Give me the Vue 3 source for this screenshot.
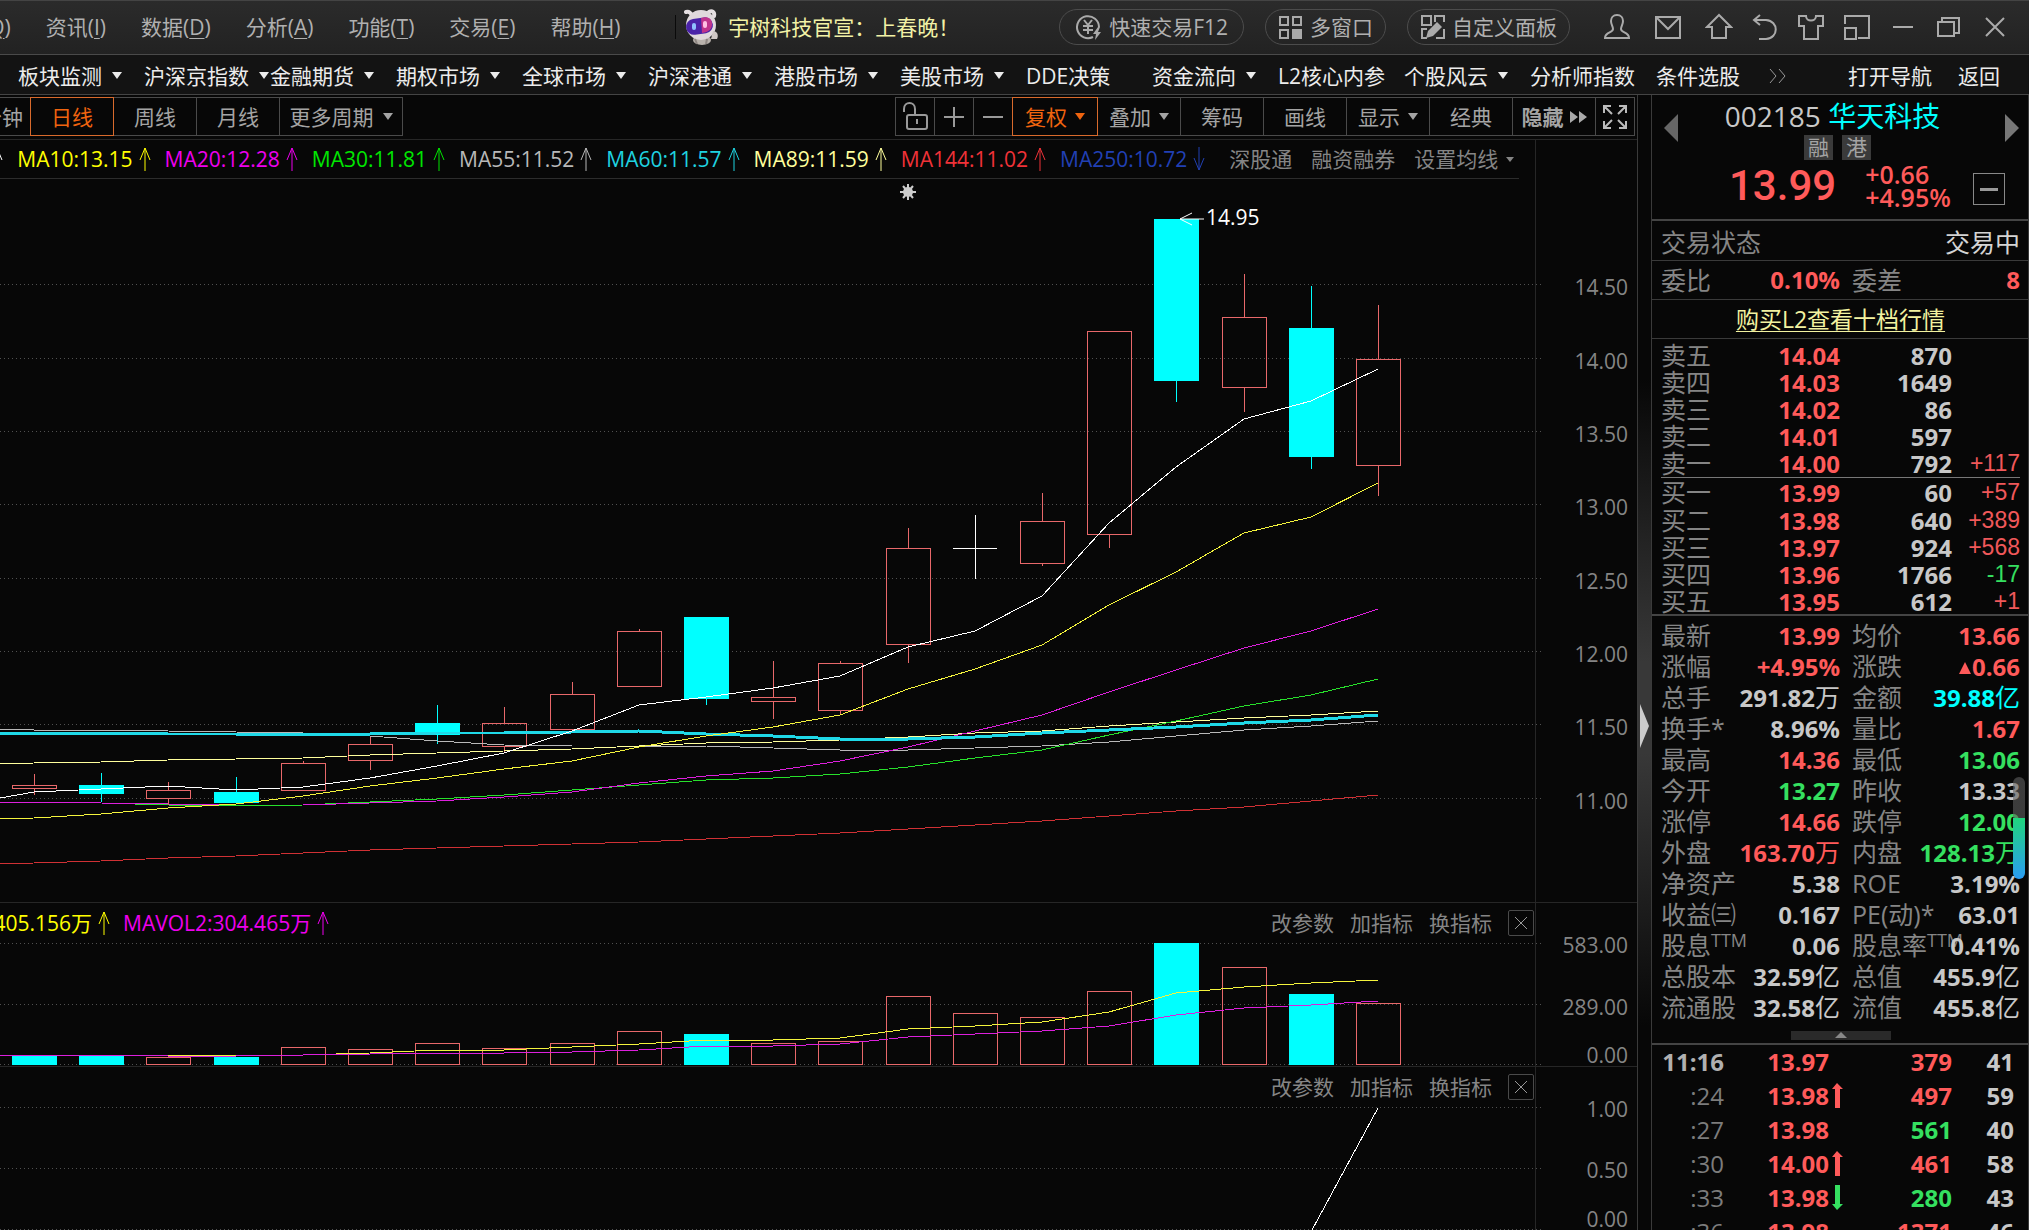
<script setup>
const menus = [
  ['报价', 'Q'], ['资讯', 'I'], ['数据', 'D'], ['分析', 'A'], ['功能', 'T'], ['交易', 'E'], ['帮助', 'H'],
]

const links = [
  ['板块监测', 1], ['沪深京指数', 1], ['金融期货', 1], ['期权市场', 1], ['全球市场', 1], ['沪深港通', 1],
  ['港股市场', 1], ['美股市场', 1], ['DDE决策', 0], ['资金流向', 1], ['L2核心内参', 0], ['个股风云', 1],
  ['分析师指数', 0], ['条件选股', 0],
]

const averages = [
  ['MA5:13.92', '#ffffff', 1], ['MA10:13.15', '#ffff00', 1], ['MA20:12.28', '#ee00ee', 1],
  ['MA30:11.81', '#00e600', 1], ['MA55:11.52', '#b8b8b8', 1], ['MA60:11.57', '#1fd3e0', 1],
  ['MA89:11.59', '#ffff9c', 1], ['MA144:11.02', '#f03238', 1], ['MA250:10.72', '#2140b4', 0],
]

// x of the n-th trading day
const cx = (i) => Math.round(34 + 67.2 * i)

// kind, body top, body bottom, wick top, wick bottom
const candles = [
  ['up', 785, 788, 774, 795], ['down', 785, 793, 773, 802], ['up', 790, 798, 782, 805],
  ['down', 792, 802, 777, 802], ['up', 763, 790, 761, 790], ['up', 744, 760, 736, 770],
  ['down', 723, 734, 705, 744], ['up', 723, 746, 707, 753], ['up', 694, 729, 682, 729],
  ['up', 631, 686, 629, 686], ['down', 617, 698, 617, 705], ['up', 697, 701, 661, 719],
  ['up', 663, 710, 661, 715], ['up', 548, 644, 528, 663], ['flat', 548, 548, 515, 579],
  ['up', 521, 563, 493, 566], ['up', 331, 534, 331, 548], ['down', 219, 380, 219, 402],
  ['up', 317, 387, 274, 412], ['down', 328, 456, 286, 469], ['up', 359, 465, 305, 496],
]

const volumes = [1056, 1056, 1057, 1057, 1047, 1049, 1043, 1048, 1043, 1031, 1034, 1043, 1041, 996, 1013, 1017, 991, 943, 967, 994, 1003]
const sellingDays = [0, 1, 3, 10, 17, 19]

// the first value is where the line enters at the left edge
const path = (ys) => ys.map((y, i) => `${i ? cx(i - 1) : 0},${y}`).join(' ')

const curves = [
  ['#d03034', 1, [864, 863, 861, 858, 856, 853, 850, 848, 846, 844, 842, 839, 836, 833, 829, 825, 821, 816, 811, 807, 801, 795]],
  ['#ffff9c', 1, [764, 763, 762, 760, 759, 758, 755, 753, 751, 749, 746, 743, 742, 740, 737, 733, 731, 726, 722, 718, 715, 711]],
  ['#b8b8b8', 1, [729, 730, 730, 731, 732, 733, 736, 741, 745, 746, 746, 746, 748, 750, 750, 748, 746, 742, 736, 730, 726, 721]],
  ['#27e02b', 1, [802, 802, 803, 805, 806, 805, 802, 799, 795, 790, 785, 780, 778, 774, 767, 758, 750, 735, 721, 706, 695, 679]],
  ['#dd1fdd', 1, [802, 802, 803, 804, 805, 805, 803, 801, 797, 792, 783, 776, 771, 761, 747, 731, 715, 692, 670, 648, 631, 609]],
  ['#1fd9e8', 3, [733, 733, 733, 734, 734, 734, 734, 733, 733, 732, 731, 734, 736, 739, 739, 737, 733, 730, 727, 723, 720, 715]],
  ['#f4f43c', 1, [819, 818, 814, 808, 804, 796, 786, 778, 769, 761, 747, 736, 727, 715, 689, 669, 645, 605, 572, 533, 517, 483]],
  ['#ffffff', 1, [798, 792, 789, 786, 790, 787, 778, 766, 753, 731, 705, 697, 688, 676, 647, 631, 596, 523, 467, 419, 401, 369]],
]
const volumeCurves = [
  ['#f4f43c', [1055, 1055, 1055, 1056, 1055, 1055, 1053, 1050, 1050, 1047, 1044, 1040, 1040, 1038, 1029, 1026, 1022, 1012, 993, 987, 983, 980]],
  ['#dd1fdd', [1055, 1055, 1055, 1056, 1056, 1055, 1054, 1053, 1053, 1052, 1050, 1046, 1046, 1044, 1037, 1034, 1031, 1026, 1015, 1008, 1005, 1001]],
]

const priceGrid = [284, 358, 431, 504, 578, 651, 724, 798]
const priceTicks = ['14.50', '14.00', '13.50', '13.00', '12.50', '12.00', '11.50', '11.00']
  .map((t, i) => [t, (priceGrid[i] + 3 - 140) / 762 * 100])
const volumeTicks = [['583.00', 26], ['289.00', 64], ['0.00', 93]]
const signalTicks = [['1.00', 26], ['0.50', 63], ['0.00', 93]]

const sells = [
  ['卖五', '14.04', 870, ''], ['卖四', '14.03', 1649, ''], ['卖三', '14.02', 86, ''],
  ['卖二', '14.01', 597, ''], ['卖一', '14.00', 792, '+117'],
]
const buys = [
  ['买一', '13.99', 60, '+57'], ['买二', '13.98', 640, '+389'], ['买三', '13.97', 924, '+568'],
  ['买四', '13.96', 1766, '-17'], ['买五', '13.95', 612, '+1'],
]

// label, superscript, number, unit, colour
const stats = [
  [['最新', '', '13.99', '', 'red'], ['均价', '', '13.66', '', 'red']],
  [['涨幅', '', '+4.95%', '', 'red'], ['涨跌', '', '0.66', '', 'red rise']],
  [['总手', '', '291.82', '万', ''], ['金额', '', '39.88', '亿', 'cyan']],
  [['换手*', '', '8.96%', '', ''], ['量比', '', '1.67', '', 'red']],
  [['最高', '', '14.36', '', 'red'], ['最低', '', '13.06', '', 'green']],
  [['今开', '', '13.27', '', 'green'], ['昨收', '', '13.33', '', '']],
  [['涨停', '', '14.66', '', 'red'], ['跌停', '', '12.00', '', 'green']],
  [['外盘', '', '163.70', '万', 'red'], ['内盘', '', '128.13', '万', 'green']],
  [['净资产', '', '5.38', '', ''], ['ROE', '', '3.19%', '', '']],
  [['收益㈢', '', '0.167', '', ''], ['PE(动)*', '', '63.01', '', '']],
  [['股息', 'TTM', '0.06', '', ''], ['股息率', 'TTM', '0.41%', '', '']],
  [['总股本', '', '32.59', '亿', ''], ['总值', '', '455.9', '亿', '']],
  [['流通股', '', '32.58', '亿', ''], ['流值', '', '455.8', '亿', '']],
]

const trades = [
  ['11:16', '13.97', '', 379, 'red', 41], [':24', '13.98', 'up', 497, 'red', 59],
  [':27', '13.98', '', 561, 'green', 40], [':30', '14.00', 'up', 461, 'red', 58],
  [':33', '13.98', 'down', 280, 'green', 43], [':36', '13.98', '', 1371, 'red', 46],
]
</script>

<template>
  <div class="app">
    <header class="titlebar">
      <nav class="menus">
        <button v-for="m in menus" :key="m[1]" type="button">{{ m[0] }}(<u>{{ m[1] }}</u>)</button>
      </nav>
      <a class="news" href="#">
        <svg class="mascot" width="38" height="36" viewBox="0 0 38 36">
          <ellipse cx="20" cy="31" rx="9" ry="5" fill="#b9b2ac" />
          <path d="M4 3c3-1 5 1 6 4M27 3c3-2 6 0 5 4" stroke="#e6e0e2" stroke-width="4" fill="none" stroke-linecap="round" />
          <circle cx="19" cy="16" r="15" fill="#e0d9dc" />
          <path d="M31 22c4 0 6 4 4 8h-6z" fill="#cfc8c6" />
          <rect x="4" y="9" width="27" height="16" rx="8" fill="#4a23a8" transform="rotate(-8 18 17)" />
          <path d="M19 9c7-2 11 1 11 6s-3 8-10 9z" fill="#c0348c" />
          <rect x="10" y="14" width="4" height="7" rx="2" fill="#8fc0ff" />
          <rect x="21" y="12" width="4" height="7" rx="2" fill="#ffc0e4" />
          <path d="M13 30l2 5M25 30l-1 5" stroke="#8e8682" stroke-width="2" />
        </svg>
        <span>宇树科技官宣：上春晚！</span>
      </a>
      <div class="pills">
        <button type="button" class="quick">
          <svg width="28" height="26" viewBox="0 0 28 26" fill="none" stroke="#aaa" stroke-width="2">
            <path d="M18 23a11 11 0 1 1 6-10" /><path d="M9 6l4 5 4-5M13 11v9M8 12h10M8 16h10" />
            <path d="M23 13l-5 7h3l-1 6 6-8h-3l2-5z" fill="#aaa" stroke="none" />
          </svg>快速交易F12
        </button>
        <button type="button">
          <svg width="26" height="26" viewBox="0 0 26 26" fill="none" stroke="#aaa" stroke-width="2">
            <path d="M2 3h8v8H2zM15 3h8v8h-8zM2 16h8v8H2z" /><path d="M14 15h10v10H14z" fill="#aaa" stroke="none" />
          </svg>多窗口
        </button>
        <button type="button">
          <svg width="26" height="26" viewBox="0 0 26 26" fill="none" stroke="#aaa" stroke-width="2">
            <path d="M2 2h9v9H2zM15 8V2h9v6M7 15H2v9h5M24 15v9h-8" />
            <path d="M6 24l2-7 9-9 5 5-9 9z" fill="#aaa" stroke="none" />
          </svg>自定义面板
        </button>
      </div>
      <div class="tools">
        <button type="button" aria-label="用户"><svg viewBox="0 0 28 28"><path d="M14 2c-4 0-6 3-6 6 0 4 2 5 2 8 0 4-8 3-8 9h24c0-6-8-5-8-9 0-3 2-4 2-8 0-3-2-6-6-6z" /></svg></button>
        <button type="button" aria-label="邮件"><svg viewBox="0 0 28 28"><path d="M2 4h24v21H2zM3 5l11 11L25 5" /></svg></button>
        <button type="button" aria-label="主页"><svg viewBox="0 0 28 28"><path d="M14 2L2 14h5v11h14V14h5z" /></svg></button>
      </div>
      <div class="tools narrow">
        <button type="button" aria-label="撤销"><svg viewBox="0 0 28 28"><path d="M9 2L3 7l6 5M3 7h12c13 1 13 18 0 19H8" /></svg></button>
        <button type="button" aria-label="皮肤"><svg viewBox="0 0 28 28"><path d="M9 3H2v10h5v13h14V13h5V3h-7c0 6-10 6-10 0z" /></svg></button>
        <button type="button" aria-label="布局"><svg viewBox="0 0 28 28"><path d="M2 11V3h24v22H15M2 15h11v11H2z" /></svg></button>
        <button type="button" aria-label="最小化"><svg viewBox="0 0 28 28"><path d="M4 14h20" /></svg></button>
        <button type="button" aria-label="还原"><svg viewBox="0 0 28 28"><path d="M3 9h16v14H3zM7 9V5h17v15h-5" /></svg></button>
        <button type="button" aria-label="关闭"><svg viewBox="0 0 28 28"><path d="M5 5l18 18M23 5L5 23" /></svg></button>
      </div>
    </header>

    <nav class="links">
      <a v-for="l in links" :key="l[0]" href="#">{{ l[0] }}<i v-if="l[1]" class="caret"></i></a>
      <button type="button" class="more" aria-label="更多">
        <svg width="18" height="18" viewBox="0 0 18 18" fill="none" stroke="#999"><path d="M1 2l6 7-6 7M10 2l6 7-6 7" /></svg>
      </button>
      <span class="ends"><a href="#">打开导航</a><a href="#">返回</a></span>
    </nav>

    <div class="body">
      <main>
        <div class="toolbar">
          <div class="group periods">
            <button type="button" class="cut">分钟</button>
            <button type="button" class="on">日线</button>
            <button type="button">周线</button>
            <button type="button">月线</button>
            <button type="button" class="wide">更多周期<i class="caret"></i></button>
          </div>
          <div class="group">
            <button type="button" class="icon" aria-label="锁定">
              <svg width="26" height="32" viewBox="0 0 26 32" fill="none" stroke="#999" stroke-width="2"><path d="M2 11V8c0-8 11-8 11 0v5" /><rect x="5" y="14" width="20" height="14" rx="2" /><path d="M15 18v5" /></svg>
            </button>
            <button type="button" class="icon" aria-label="放大"><svg width="22" height="22" viewBox="0 0 22 22" stroke="#999" stroke-width="2"><path d="M1 11h20M11 1v20" /></svg></button>
            <button type="button" class="icon" aria-label="缩小"><svg width="22" height="22" viewBox="0 0 22 22" stroke="#999" stroke-width="2"><path d="M1 11h20" /></svg></button>
            <button type="button" class="on adjust">复权<i class="caret"></i></button>
            <button type="button">叠加<i class="caret"></i></button>
            <button type="button">筹码</button>
            <button type="button">画线</button>
            <button type="button">显示<i class="caret"></i></button>
            <button type="button">经典</button>
            <button type="button" class="bold">隐藏<svg width="17" height="14" viewBox="0 0 17 14" fill="#aaa"><path d="M0 1l8 6-8 6zM9 1l8 6-8 6z" /></svg></button>
            <button type="button" class="icon" aria-label="全屏">
              <svg width="26" height="26" viewBox="0 0 26 26" fill="none" stroke="#bbb" stroke-width="2"><path d="M2 9V2h7M17 2h7v7M24 17v7h-7M9 24H2v-7M2 2l8 8M24 2l-8 8M24 24l-8-8M2 24l8-8" /></svg>
            </button>
          </div>
        </div>

        <section class="panel">
          <div class="plot">
            <div class="averages">
              <span v-for="a in averages" :key="a[0]" :style="{ color: a[1] }">{{ a[0] }}<svg width="12" height="24" viewBox="0 0 12 24" fill="none" stroke="currentColor"><path :d="a[2] ? 'M6 24V1M1 13L6 1l5 12' : 'M6 0v23M1 11l5 12 5-12'" /></svg></span>
              <a href="#">深股通</a>
              <a href="#">融资融券</a>
              <button type="button">设置均线<i class="caret"></i></button>
            </div>
            <svg class="chart" viewBox="0 179 1535 723">
              <line v-for="y in priceGrid" :key="y" class="grid" x1="0" x2="1541" :y1="y" :y2="y" />
              <g v-for="(c, i) in candles" :key="i" :class="c[0]">
                <template v-if="c[0] === 'flat'">
                  <path :d="`M${cx(i)} ${c[3]}V${c[4]}M${cx(i) - 22} ${c[1]}H${cx(i) + 22}`" />
                </template>
                <template v-else>
                  <path :d="`M${cx(i)} ${c[3]}V${c[1]}M${cx(i)} ${c[2]}V${c[4]}`" />
                  <rect :x="cx(i) - 22" :y="c[1]" width="44" :height="c[2] - c[1]" />
                </template>
              </g>
              <polyline v-for="c in curves" :key="c[0]" class="curve" :points="path(c[2])" :stroke="c[0]" :stroke-width="c[1]" />
              <path d="M1204 219h-24M1192 213l-12 6 12 6" fill="none" stroke="#fff" />
              <text x="1206" y="225" fill="#fff">14.95</text>
              <path d="M908 184v16M900 192h16M903 186l10 12M913 186l-10 12" stroke="#ccc" stroke-width="2" />
              <circle cx="908" cy="192" r="5" fill="#ccc" />
            </svg>
          </div>
          <div class="axis"><span v-for="t in priceTicks" :key="t[0]" :style="{ top: t[1] + '%' }">{{ t[0] }}</span></div>
        </section>

        <section class="panel">
          <div class="plot">
            <div class="indicator">
              <p class="vols">
                <span class="yellow">MAVOL1:405.156万<svg width="12" height="24" viewBox="0 0 12 24" fill="none" stroke="currentColor"><path d="M6 24V1M1 13L6 1l5 12" /></svg></span>
                <span class="magenta">MAVOL2:304.465万<svg width="12" height="24" viewBox="0 0 12 24" fill="none" stroke="currentColor"><path d="M6 24V1M1 13L6 1l5 12" /></svg></span>
              </p>
              <button type="button">改参数</button><button type="button">加指标</button><button type="button">换指标</button>
              <button type="button" class="close" aria-label="关闭"><svg width="14" height="14" viewBox="0 0 14 14" stroke="#999"><path d="M1 1l12 12M13 1L1 13" /></svg></button>
            </div>
            <svg class="chart" viewBox="0 939 1535 127">
              <line v-for="y in [943, 1004, 1064]" :key="y" class="grid" x1="0" x2="1541" :y1="y" :y2="y" />
              <rect v-for="(v, i) in volumes" :key="i" :class="sellingDays.includes(i) ? 'down' : 'up'" :x="cx(i) - 22" :y="v" width="44" :height="1064 - v" />
              <polyline v-for="c in volumeCurves" :key="c[0]" class="curve" :points="path(c[1])" :stroke="c[0]" />
            </svg>
          </div>
          <div class="axis"><span v-for="t in volumeTicks" :key="t[0]" :style="{ top: t[1] + '%' }">{{ t[0] }}</span></div>
        </section>

        <section class="panel">
          <div class="plot">
            <div class="indicator">
              <button type="button">改参数</button><button type="button">加指标</button><button type="button">换指标</button>
              <button type="button" class="close" aria-label="关闭"><svg width="14" height="14" viewBox="0 0 14 14" stroke="#999"><path d="M1 1l12 12M13 1L1 13" /></svg></button>
            </div>
            <svg class="chart" viewBox="0 1103 1535 127">
              <line v-for="y in [1107, 1168, 1229]" :key="y" class="grid" x1="0" x2="1541" :y1="y" :y2="y" />
              <path class="curve" d="M1312 1230L1378 1108" stroke="#fff" />
            </svg>
          </div>
          <div class="axis"><span v-for="(t, i) in signalTicks" :key="i" :style="{ top: t[1] + '%' }">{{ t[0] }}</span></div>
        </section>
      </main>

      <div class="gutter">
        <button type="button" aria-label="收起侧栏"><svg width="9" height="44" viewBox="0 0 9 44"><path d="M0 0l9 22-9 22z" fill="#ccc" /></svg></button>
      </div>

      <aside>
        <div class="quote">
          <button type="button" aria-label="上一只"><svg width="14" height="28" viewBox="0 0 14 28"><path d="M14 0v28L0 14z" fill="#666" /></svg></button>
          <div class="name">
            <h1>002185 <b>华天科技</b></h1>
            <p class="tags"><span>融</span><span>港</span></p>
          </div>
          <button type="button" aria-label="下一只"><svg width="14" height="28" viewBox="0 0 14 28"><path d="M0 0v28l14-14z" fill="#777" /></svg></button>
        </div>
        <div class="price">
          <strong>13.99</strong>
          <p>+0.66<br>+4.95%</p>
          <button type="button" aria-label="折叠"></button>
        </div>
        <div class="row state"><span>交易状态</span><em>交易中</em></div>
        <div class="row ratio"><span>委比</span><b class="red">0.10%</b><span>委差</span><b class="red">8</b></div>
        <div class="row promo"><a href="#">购买L2查看十档行情</a></div>

        <table class="book">
          <tbody>
            <tr v-for="r in sells" :key="r[0]"><th>{{ r[0] }}</th><td class="red">{{ r[1] }}</td><td>{{ r[2] }}</td><td class="delta">{{ r[3] }}</td></tr>
          </tbody>
        </table>
        <table class="book buy">
          <tbody>
            <tr v-for="r in buys" :key="r[0]"><th>{{ r[0] }}</th><td class="red">{{ r[1] }}</td><td>{{ r[2] }}</td><td class="delta" :class="{ minus: r[3][0] === '-' }">{{ r[3] }}</td></tr>
          </tbody>
        </table>

        <div class="figures">
          <table>
            <tbody>
              <tr v-for="(s, i) in stats" :key="i">
                <template v-for="f in s" :key="f[0]">
                  <th>{{ f[0] }}<sup v-if="f[1]">{{ f[1] }}</sup></th>
                  <td :class="f[4]">{{ f[2] }}<small v-if="f[3]">{{ f[3] }}</small></td>
                </template>
              </tr>
            </tbody>
          </table>
          <button type="button" class="fold" aria-label="收起"><svg width="12" height="6" viewBox="0 0 12 6"><path d="M0 6l6-6 6 6z" fill="#888" /></svg></button>
          <i class="meter"></i>
        </div>

        <table class="trades">
          <tbody>
            <tr v-for="(t, i) in trades" :key="t[0]">
              <th :class="{ first: !i }">{{ t[0] }}</th>
              <td class="red">{{ t[1] }}</td>
              <td class="mark">
                <svg v-if="t[2]" width="11" height="25" viewBox="0 0 11 25"><path v-if="t[2] === 'up'" d="M3 25V6H0l5-6 6 6H8v19z" fill="#ff5a5a" /><path v-else d="M3 0v19H0l5 6 6-6H8V0z" fill="#35e060" /></svg>
              </td>
              <td :class="t[4]">{{ t[3] }}</td>
              <td>{{ t[5] }}</td>
            </tr>
          </tbody>
        </table>
      </aside>
    </div>
  </div>
</template>

<style>
body { margin: 0; background: #070707; overflow: hidden; }
</style>

<style scoped>
* { box-sizing: border-box; }
.app {
  display: flex; flex-direction: column; height: 100vh; overflow: hidden;
  background: #070707; color: #c8c8c8;
  font: 21px/26px "Open Sans", "Noto Sans CJK SC", sans-serif;
  white-space: nowrap;
}
button { font: inherit; color: inherit; background: none; border: 0; padding: 0; }
a { color: inherit; text-decoration: none; }
p, h1 { margin: 0; }
svg { display: block; flex: none; }
table { border-collapse: collapse; table-layout: fixed; width: 100%; }
th, td { padding: 0; font-weight: 400; }
.red { color: #ff5a5a !important; }
.green { color: #35e060 !important; }
.cyan { color: #00ffff !important; }
.yellow { color: #ffff00; }
.magenta { color: #ee00ee; }
.caret { border: 5px solid transparent; border-top: 7px solid; border-bottom: 0; }

.titlebar {
  flex: none; display: flex; align-items: center; height: 55px; padding: 0 20px 2px 0;
  background: linear-gradient(#2b2b2b, #222); border-top: 1px solid #444; border-bottom: 1px solid #4a4a4a;
  color: #b0b0b0;
}
.menus { display: flex; gap: 35px; margin-left: -60px; }
.menus u { text-underline-offset: 3px; text-decoration-thickness: 1px; }
.news { display: flex; align-items: center; gap: 8px; margin-left: 55px; padding-left: 6px; border-left: 1px solid #0a0a0a; height: 24px; color: #f2f2a6; }
.pills { display: flex; gap: 21px; margin-left: auto; }
.pills button { display: flex; align-items: center; gap: 6px; height: 36px; padding: 0 12px; border: 1px solid #4c4c4c; border-radius: 18px; }
.pills .quick { padding: 0 15px; }
.tools { display: flex; gap: 23px; margin-left: 33px; }
.tools.narrow { gap: 18px; margin-left: 18px; }
.tools svg { width: 28px; height: 28px; fill: none; stroke: #aaa; stroke-width: 2; }

.links { flex: none; display: flex; align-items: center; height: 40px; padding: 2px 0 0 18px; background: #131313; border-bottom: 1px solid #444; color: #ececec; }
.links > a { flex: 0 0 126px; display: flex; align-items: center; gap: 10px; }
.more { margin-left: -13px; }
.ends { display: flex; gap: 26px; margin-left: auto; padding-right: 29px; }

.body { flex: 1; display: flex; min-height: 0; }
main { flex: 1; min-width: 0; border-right: 1px solid #3a3a3a; }
.toolbar { display: flex; justify-content: space-between; height: 45px; padding: 2px 2px 4px 0; border-bottom: 1px solid #262626; color: #a4a4a4; }
.group { display: flex; }
.periods { margin-left: -52px; }
.group button { display: flex; align-items: center; justify-content: center; gap: 8px; width: 84px; height: 39px; margin-left: -1px; border: 1px solid #4a4a4a; }
.group .wide { width: 124px; gap: 9px; }
.group .icon { width: 40px; }
.group .cut { justify-content: flex-end; padding-right: 7px; }
.group .on { position: relative; color: #f0640f; border-color: #d86a2c; }
.group .adjust { width: 86px; }
.group .bold { font-weight: 600; gap: 6px; }

.panel { display: flex; border-bottom: 1px solid #262626; }
.plot { flex: 1; min-width: 0; }
.axis { position: relative; flex: 0 0 102px; border-left: 1px solid #262626; color: #858585; }
.axis span { position: absolute; right: 9px; transform: translateY(-50%); }
.averages { display: flex; align-items: center; gap: 14px; height: 39px; margin: 0 16px 0 -118px; border-bottom: 1px solid #2c2c2c; color: #858585; }
.averages span, .vols span { display: flex; align-items: center; gap: 6px; }
.averages a, .averages button { margin-left: 5px; }
.averages a:first-of-type { margin-left: 10px; }
.averages button { display: flex; align-items: center; gap: 8px; }
.averages .caret { border-width: 5px 4px 0; }
.indicator { display: flex; align-items: center; justify-content: flex-end; gap: 16px; height: 36px; padding: 4px 1px 0 0; color: #858585; }
.vols { display: flex; gap: 13px; margin: 0 auto 0 -96px; }
.close { display: flex; align-items: center; justify-content: center; width: 26px; height: 26px; border: 1px solid #4a4a4a; border-radius: 2px; }
.chart { width: 100%; height: auto; overflow: visible; }
.chart text { font-size: 21px; }
.grid { stroke: #505050; stroke-dasharray: 1 3; shape-rendering: crispEdges; }
.curve { fill: none; shape-rendering: crispEdges; }
.up, .down, .flat { shape-rendering: crispEdges; }
.up { stroke: #e8686a; fill: none; }
.down { stroke: #00ffff; fill: #00ffff; }
.flat { stroke: #fff; }

.gutter { flex: 0 0 13px; display: flex; align-items: center; justify-content: flex-end; background: linear-gradient(#070707 25%, #383838 50%, #383838 58%, #070707 82%); }
.gutter button { margin-top: 127px; padding-right: 2px; }

aside { flex: 0 0 378px; border: solid #3a3a3a; border-width: 0 1px; overflow: hidden; font-size: 25px; }
.quote { display: flex; justify-content: space-between; align-items: center; height: 66px; padding: 0 9px 0 12px; }
.quote h1 { padding-right: 18px; font-size: 28px; line-height: 38px; font-weight: 400; }
.quote h1 b { color: #00ffff; font-weight: 400; }
.tags { display: flex; justify-content: center; gap: 9px; padding-right: 8px; font-size: 21px; line-height: 25px; color: #a4a4a4; }
.tags span { padding: 0 4px; background: #3a3a3a; }
.price { display: flex; align-items: center; height: 60px; padding: 0 23px 8px 77px; color: #ff5a5a; border-bottom: 2px solid #444; }
.price strong { font: 500 42px/50px Roboto, "Liberation Sans", sans-serif; }
.price p { margin-left: 29px; font-size: 25px; line-height: 23px; font-weight: 600; }
.price button { width: 32px; height: 32px; margin: 6px 0 0 auto; border: 1px solid #888; background: linear-gradient(#999, #999) center / 18px 3px no-repeat; }
.row { display: flex; align-items: center; justify-content: space-between; height: 39px; padding: 0 8px 0 9px; border-bottom: 1px solid #3a3a3a; color: #858585; }
.row em { font-style: normal; color: #d4d4d4; }
.state { height: 40px; padding-top: 2px; }
.ratio span { width: 50px; }
.ratio b { width: 129px; margin-right: 12px; text-align: right; font-size: 24px; }
.ratio b:last-child { width: 118px; margin-right: 0; }
.promo { justify-content: center; font-size: 23px; color: #f2f2a0; }
.promo a { text-decoration: underline; text-underline-offset: 3px; text-decoration-thickness: 1px; }

.book { width: 359px; margin: 3px 8px 0 9px; }
.book tr { height: 27px; line-height: 27px; }
.book th { width: 60px; text-align: left; color: #858585; }
.book td { text-align: right; font-size: 24px; font-weight: 700; width: 119px; }
.book td:nth-child(3) { width: 112px; }
.book .delta { width: 68px; font: 23px/25px "Liberation Sans", sans-serif; color: #f0585a; }
.book .minus { color: #35e060; }
.book.buy { border-top: 1px solid #777; margin-top: 0; margin-bottom: -1px; }
.book.buy tr:first-child { height: 29px; }

.figures { position: relative; border: solid #444; border-width: 2px 0; padding: 4px 8px 3px 9px; }
.figures tr { height: 31px; line-height: 31px; }
.figures th { width: 50px; text-align: left; color: #858585; }
.figures td { width: 129px; text-align: right; font-size: 24px; font-weight: 700; }
.figures th:nth-child(3) { width: 62px; padding-left: 12px; }
.figures td:last-child { width: 118px; }
.figures small { font-size: 25px; font-weight: 400; line-height: 1px; }
.figures sup { font-size: 18px; line-height: 1px; vertical-align: 8px; }
.rise::before { content: ""; display: inline-block; margin-right: 1px; border: 6px solid transparent; border-top: 0; border-bottom: 12px solid #ff5a5a; vertical-align: 2px; }
.fold { display: flex; align-items: center; justify-content: center; width: 100px; height: 9px; margin: 8px auto 0; background: #2a2a2a; }
.meter { position: absolute; right: 3px; top: 161px; width: 12px; height: 102px; border-radius: 6px; background: linear-gradient(#60606099 0 40%, #20d67c 40%, #2a9cf4); }

.trades { width: 353px; margin: 0 0 0 9px; }
.trades tr { height: 34px; line-height: 34px; }
.trades th { width: 63px; text-align: right; font-size: 24px; color: #7c7c7c; }
.trades .first { font-weight: 700; color: #b0b0b0; }
.trades td { width: 105px; text-align: right; font-size: 24px; font-weight: 700; }
.trades .mark { width: 18px; padding-left: 3px; }
.trades td:last-child { width: 62px; }
</style>
